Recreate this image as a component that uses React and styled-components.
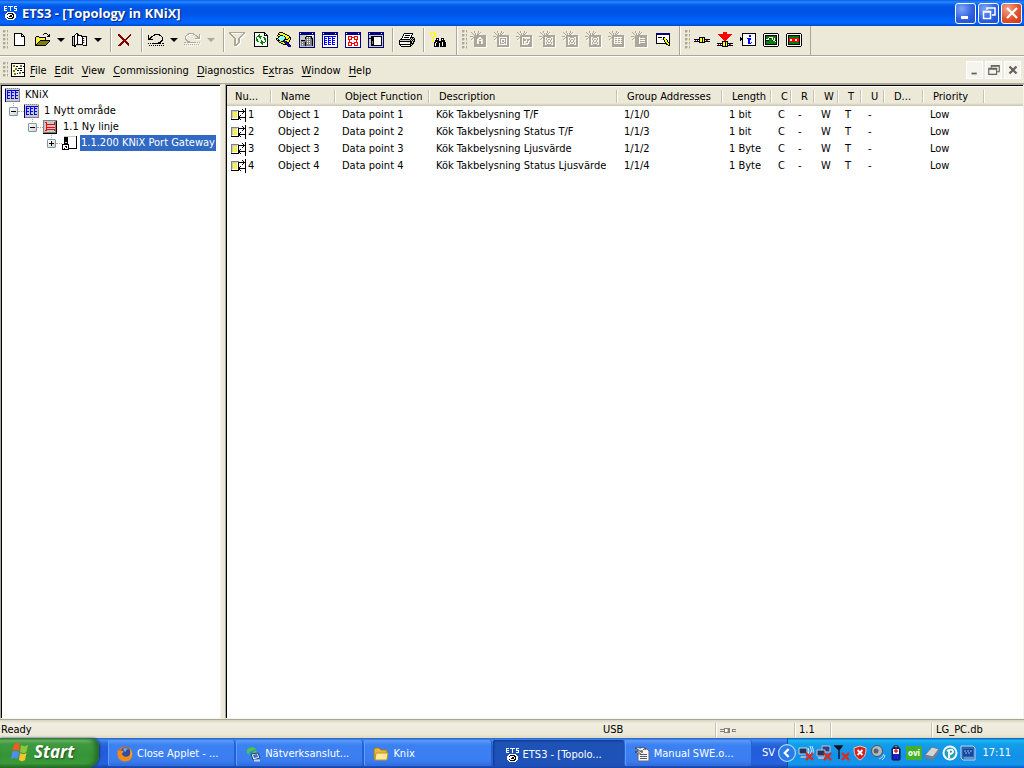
import React, { useState } from 'react';
import styled, { createGlobalStyle, css } from 'styled-components';

const GlobalStyle = createGlobalStyle`
  * {
    box-sizing: border-box;
  }
  body {
    margin: 0;
    background: #ece9d8;
  }
  body, button {
    font-family: "DejaVu Sans Condensed", Tahoma, "DejaVu Sans", sans-serif;
    font-size: 11px;
    line-height: 16px;
    color: #000;
  }
  button {
    border: 0;
    padding: 0;
    background: none;
  }
`;

const Root = styled.div`
  display: flex;
  flex-direction: column;
  height: 100vh;
  overflow: hidden;
  background: #ece9d8;
`;

/* ---------- sprites ---------- */

const COLORS = {
  k: '#000000', w: '#ffffff', n: '#000080', b: '#0000ff', r: '#ff0000', d: '#800000',
  g: '#aca899', s: '#c8c8c8', m: '#808080', y: '#ffff00', o: '#808000', e: '#008000',
  c: '#80ffff', q: '#666257', f: '#f0e890',
};

const SpriteSvg = styled.svg`
  display: block;
  flex: none;
`;

function Sprite({ rows, emboss }) {
  const width = rows[0].length + (emboss ? 1 : 0);
  const height = rows.length + (emboss ? 1 : 0);
  const runs = [];
  rows.forEach((row, y) => {
    let x = 0;
    while (x < row.length) {
      let end = x + 1;
      while (row[end] === row[x]) end += 1;
      if (COLORS[row[x]]) runs.push({ x, y, w: end - x, fill: COLORS[row[x]] });
      x = end;
    }
  });
  return (
    <SpriteSvg width={width} height={height} shapeRendering="crispEdges" aria-hidden="true">
      {emboss && runs.map(r => (
        <rect key={`s${r.x}-${r.y}`} x={r.x + 1} y={r.y + 1} width={r.w} height="1" fill="#fff" />
      ))}
      {runs.map(r => (
        <rect key={`${r.x}-${r.y}`} x={r.x} y={r.y} width={r.w} height="1" fill={r.fill} />
      ))}
    </SpriteSvg>
  );
}

const NEW = [
  'kkkkkkkk...',
  'kwwwwwwkk..',
  'kwwwwwwkwk.',
  'kwwwwwwkkkk',
  'kwwwwwwwwwk',
  'kwwwwwwwwwk',
  'kwwwwwwwwwk',
  'kwwwwwwwwwk',
  'kwwwwwwwwwk',
  'kwwwwwwwwwk',
  'kwwwwwwwwwk',
  'kwwwwwwwwwk',
  'kkkkkkkkkkk',
];
const OPEN = [
  '.........kkk...',
  '........k...k.k',
  '.............kk',
  '.kkk........kkk',
  'kfyfkkkkkkk....',
  'kyfyfyfyfyk....',
  'kfyfyfyfyfk....',
  'kyfyfkkkkkkkkkk',
  'kfyfkoooooooook',
  'kyfkoooooooook.',
  'kfkoooooooook..',
  'kkoooooooook...',
  'kkkkkkkkkkk....',
];
const BOOK = [
  '....kk.........',
  '...kwkk........',
  '..kwwkkkkk.....',
  'kkkwwkwwwkkkkkk',
  'kskwwkwwwwkwwwk',
  'kskwwkwwwwkdswk',
  'kskwwkwwwwkwwwk',
  'kskwwkwwwwkdswk',
  'kskwwkwwwwkwwwk',
  'kskwwkwwwwkdswk',
  'kskwwkwwwwkwwwk',
  'kskwkkkkkkkwwwk',
  'kkkkssssssskkkk',
  '..kk...........',
];
const DELETE = [
  'dd..........d',
  'ddd........dd',
  '.ddd......dd.',
  '..ddd....dd..',
  '...ddd..dd...',
  '....ddddd....',
  '.....ddd.....',
  '....ddddd....',
  '...ddd.ddd...',
  '..ddd...ddd..',
  '.ddd.....dd..',
  'ddd.......d..',
];
const UNDO = [
  '......kkkkkk....',
  'k....kk....kk...',
  'k..kk........k..',
  'k.kk..........k.',
  'kkk...........k.',
  'kkkkk.........k.',
  '.............kk.',
  '............kk..',
  '..........kkk...',
  'k.k.kkkkkkkkk.kk',
  '................',
  '.k.k.k.k.k.k.k.k',
];
const REDO = UNDO.map(row => row.split('').reverse().join('').replace(/k/g, 'g'));
const FILTER = [
  'gggggggggggggggg',
  'gg............gg',
  '.gg..........gg.',
  '..gg........gg..',
  '...gg......gg...',
  '....gg....gg....',
  '.....gg..gg.....',
  '.....gg..gg.....',
  '.....gg..gg.....',
  '.....gg..gg.....',
  '.....gg..gg.....',
  '.....gg.gg......',
  '.....gggg.......',
  '.....ggg........',
];
const REFRESH = [
  'kkkkkkkkkkk...',
  'kwwwwwwwwwkk..',
  'kwwwwewwwwkwk.',
  'kwwweewwwwkkkk',
  'kwweeeeewwwwwk',
  'kwewweewweewwk',
  'kwewwwewwweewk',
  'kweewwwwwweewk',
  'kweewwwewwwewk',
  'kwweewweewwewk',
  'kwwwwweeeeewwk',
  'kwwwwwweewwwwk',
  'kwwwwwwwewwwwk',
  'kwwwwwwwwwwwwk',
  'kkkkkkkkkkkkkk',
];
const MAGNIFY = [
  '...kkkk.........',
  '..kyyyykk.......',
  '..kkyyyyykk.....',
  '.kyykkkyyyykk...',
  '..kkcccckyyyyk..',
  '..kcwcccckyyykk.',
  'kkcwccccckyykyk.',
  'kykccccckkkkyyk.',
  '.kkkccckkyyyyk..',
  '..kyykkkbbkyyk..',
  '...kkyyykbbkk...',
  '.....kkyykbbk...',
  '.......kkkkbbk..',
  '...........kbbk.',
  '............kbn.',
];

const frame = inner => [
  'nnnnnnnnnnnnnnnn',
  'nwnnnnnnnnnnnwnn',
  'nnnnnnnnnnnnnnnn',
  ...inner.map(row => `n${row}n`),
  'nnnnnnnnnnnnnnnn',
];
const WIN_BUILDING = frame([
  'ssssssswwwwwww',
  'sssssskkkkkkws',
  'ssssskmwmwmkss',
  'ssssskmmmmmkks',
  'sssssmmwmwmmks',
  'skkkkmmmmmmmks',
  'smmmmmmwmwmmks',
  'smwmmkmmmmmmks',
  'smmmmkmwmwmmks',
  'smwmmkmmmmmmks',
  'smmmmkmmmmmmks',
  'ssssssssssssss',
]);
const WIN_GRID = frame([
  'wwwwwwwwwwwwww',
  'wbbbbbbbbbbbbw',
  'wbwwwbwwwbwwww',
  'wbbbwbbbwbbbww',
  'wbwwwbwwwbwwww',
  'wbbbwbbbwbbbww',
  'wbwwwbwwwbwwww',
  'wbbbwbbbwbbbww',
  'wbwwwbwwwbwwww',
  'wbbbwbbbwbbbww',
  'wwwwwwwwwwwwww',
  'wwwwwwwwwwwwww',
]);
const WIN_RED = frame([
  'wwwwwwwwwwwwww',
  'wwrrrrwwrrrrww',
  'wwrwwrrrrwwrww',
  'wwrwwrwwrwwrww',
  'wwrrrrwwrrrrww',
  'wwwrwwwwwwrwww',
  'wwwrwwwwwwrwww',
  'wwrrrrwwrrrrww',
  'wwrwwrrrrwwrww',
  'wwrwwrwwrwwrww',
  'wwrrrrwwrrrrww',
  'wwwwwwwwwwwwww',
]);
const WIN_DEVICE = frame([
  'ssssssssssssss',
  'sskkkkkkkkkkks',
  'sskkkwwwwwwwks',
  'kkkkkwwwwwwwks',
  'sskkkwwwwwwwks',
  'sskkkwwwwwwwks',
  'sskmkwwwwwwwks',
  'sskmkwwwwwwwks',
  'sskmkwwwwwwwks',
  'sskkkwwwwwwwks',
  'sskkkkkkkkkkks',
  'ssssssssssssss',
]);
const PRINT = [
  '.....kkkkkkkkk..',
  '....kwwwwwwwwk..',
  '....kwkkkkkwk...',
  '...kwwwwwwwwk...',
  '...kwkkkkkwkkkk.',
  '..kwwwwwwwwksksk',
  '.kkkkkkkkkkskskk',
  'kssssssssssksksk',
  'kkkkkkkkkkkkkskk',
  'kwwwwwwwyywkksk.',
  'kwwwwwwwwwwkkkk.',
  'kkkkkkkkkkkksk..',
  '.kwwwwwwwwwkk...',
  '..kkkkkkkkkk....',
];
const FIND = [
  '.yyyy...........',
  'yy..yy..........',
  'yy..yy..........',
  '....yy..........',
  '...yy...........',
  '..yy............',
  '..yy..kkk..kkk..',
  '......kwk..kwk..',
  '..yy.kkkk..kkkk.',
  '..yy.kkkkkkkkkk.',
  '....kkwkkkkkwkkk',
  '....kwkkkwkkwkkk',
  '....kwkkk.kkwkkk',
  '....kwkkk.kkwkkk',
  '....kkkkk.kkkkkk',
];

const disabled = glyph => [
  '....g...g.......',
  '.g..g...g.g.....',
  '..g..g.g.g......',
  '...g.g.gg.......',
  '....gggggggggggg',
  'ggg.gggggggggggg',
  ...glyph.map((row, i) => `${['...g', '..g.', '.g..'][i] || '....'}gg${row}gg`),
  '....gggggggggggg',
  '....gggggggggggg',
];
// inside the box the glyph is cut out of the panel colour
const DIS_HOUSE = disabled(['ggg..ggg', 'gg....gg', 'g..gg..g', 'g......g', 'g..gg..g', 'g..gg..g', 'g..gg..g', 'gggggggg']);
const DIS_SQUARE = disabled(['........', '.gggggg.', '.g....g.', '.g.gg.g.', '.g.gg.g.', '.g...gg.', '.gggg.g.', '........']);
const DIS_FLAG = disabled(['........', '.g......', '.ggg.ggg', '.ggg.gg.', '.g...g..', '.g..gg.g', '.g.....g', '......gg']);
const DIS_NODES = disabled(['..gggg..', '.g....g.', '.g.gg.g.', '..g..g..', '..g..g..', '.g.gg.g.', '.g....g.', '..gggg..']);
const DIS_TABLE = disabled(['........', '.gg.gg.g', '........', '.gg.gg.g', '........', '.gg.gg.g', '........', 'gggggggg']);
const DIS_TREE = disabled(['gg.ggggg', 'gg......', 'gg.ggggg', 'gg......', 'gg.ggggg', 'gg......', 'gg.ggggg', 'gggggggg']);

const EDIT_WIN = [
  'nnnnnnnnnnnnnn',
  'nnnnnnnnnnnnnn',
  'kwwwwwwwwwwwwk',
  'kwwwwwwwwwwwwk',
  'kwkkkkwkkwwwwk',
  'kwwwwwwkyywwwk',
  'kwwwwsskyykwwk',
  'kwwwwwwwkyykwk',
  'kwwwwwwwkyykwk',
  'kwwwwwwwwkyykk',
  'kkkkkkkkkkkyyk',
  '..........kkyk',
  '............kk',
];
const BUS = [
  '.....kkkkkk.....',
  '.....kyykyk.....',
  'kkkkkkywkykkkkkk',
  'wrwbwkywkykwbrww',
  'kkkkkkyykykkkkkk',
  '.....kkkkkk.....',
];
const DOWNLOAD = [
  '......rrrr......',
  '......rrrr......',
  '.rrrrrrrrrrrrrr.',
  '..rrrrrrrrrrrr..',
  '...rrrrrrrrrr...',
  '....rrrrrrrr....',
  '.....rrrrrr.....',
  '......rrrr......',
  '.......rr.......',
  ...BUS,
];
const INFO = [
  '..kkkkkkkkkkkkkk',
  '..kwwwwwwwwwwwwk',
  '..kwwwwwwbbwwwwk',
  '..kwwwwwwbbwwwwk',
  'k.kwwwwwwwwwwwwk',
  'kkkwwwwbbbbwwwwk',
  'kkkwwwwwbbbwwwwk',
  'k.kwwwwwbbwwwwwk',
  '..kwwwwwbbwwwwwk',
  '..kwwwwwbbwbwwwk',
  '..kwwwwwbbbwwwwk',
  '..kwwwwwwwwwwwwk',
  '..kkkkkkkkkkkkkk',
];
const monitor = inner => [
  '.kkkkkkkkkkkkkk.',
  'kwwwwwwwwwwwwwwk',
  ...inner.map(row => `kw${row}wk`),
  'kwwwwwwwwwwwwwwk',
  '.kkkkkkkkkkkkkk.',
];
const SCOPE = monitor([
  'kkkkkkkkkkkk',
  'keeeeeeeeeek',
  'keeewwwweeek',
  'keewkkewewek',
  'kwwweeewewek',
  'kkkkeeekwwkk',
  'keeeeeeeeewk',
  'keeeeeeeeeek',
  'keeeeeeeeeek',
  'kkkkkkkkkkkk',
]);
const RECORDER = monitor([
  'kkkkkkkkkkkk',
  'keeeeeeeeeek',
  'keeeeeeeeeek',
  'krrrrrrrrrrk',
  'krwwrrrwwrrk',
  'krwwrrrwwrrk',
  'krrrrrrrrrrk',
  'keeeeeeeeeek',
  'keeeeeeeeeek',
  'kkkkkkkkkkkk',
]);

const AREA = [
  'msmsmsmsmsmsmss',
  'nsssssssssssssm',
  'nsbbbbbbbbbbbbm',
  'nsbsssbsssbsssm',
  'nsbbbsbbbsbbbsm',
  'nsbsssbsssbsssm',
  'nsbsssbsssbsssm',
  'nsbbbsbbbsbbbsm',
  'nsbsssbsssbsssm',
  'nsbsssbsssbsssm',
  'nsbbbsbbbsbbbsm',
  'nssssssssssssssm'.slice(0, 14) + 'm',
  'nsssssssssssssm',
  'nmmmmmmmmmmmmmm',
];
const LINE = [
  'mmmmmmmmmmmmmm',
  'msssssssssssmk',
  'msrrsssssssrmk',
  'mssrsssssssrmk',
  'mssrrrrrrrrrmk',
  'mssrssssssssmk',
  'mssrssssssssmk',
  'mssrrrrrrrrrmk',
  'mssrssssssssmk',
  'mssrrrrrrrrrmk',
  'msrrsssssssrmk',
  'msssssssssssmk',
  'mmmmmmmmmmmmmk',
  'kkkkkkkkkkkkkk',
];
const DEVICE = [
  '..ssssssssssssk',
  '..kkkkwwwwwwwwk',
  '..kkkkwwwwwwwwk',
  '..kkkkwwwwwwwwk',
  '..kkkkwwwwwwwwk',
  '..kkkkwwwwwwwwk',
  '..ksskwwwwwwwwk',
  '..kkkkwwwwwwwwk',
  'kkkkkkkwwwwwwwk',
  'kwwwwwkwwwwwwwk',
  'kwwkkwkwwwwwwwk',
  'kwwwkwkwwwwwwwk',
  'kwkwwwkkkkkkkkk',
  'kkkkkkk........',
];
const OBJECT = [
  '..............k.',
  '...........k..k.',
  'mmmmmmmm....k.k.',
  'mssssswkkkkkkkk.',
  'msyfyfwk....k.k.',
  'msfyfywk...k..k.',
  'msyfyfwk......k.',
  'msfyfywk.k....k.',
  'msyfyfwkk.....k.',
  'msfyfywkkkkkkkk.',
  'mwwwwwwkk.....k.',
  'kkkkkkkk.k....k.',
  '..............k.',
  '..............k.',
];
const DOCUMENT = [
  'kkkkkkkkkkkkkk',
  'kwwwwwwwwwwwwk',
  'kwoowwwwwoowwk',
  'kwoowkkwwoowkk',
  'kwwwwwwwwwwwwk',
  'kwwwoowkkkkwwk',
  'kwwwoowwwwwwwk',
  'kwoowwkkwkkwwk',
  'kwoowwwwwwwwwk',
  'kwwwwwwwoowkkk',
  'kwwoowkwoowwwk',
  'kwwoowwwwwwwwk',
  'kwwwwwwwwwwwwk',
  'kkkkkkkkkkkkkk',
];
const PLUG = [
  '....mmmmmm......',
  'mmmmmwwsmm..mmmm',
  '....mwwsmm..m...',
  'mmmmmwwsmm..mmmm',
  '....mmmmmm......',
];
const ETS = [
  'www.wwwww.www',
  'w.....w...w..',
  'www...w...www',
  'w.....w.....w',
  'www...w...www',
  '.............',
  '...wwwwwww...',
  '..wwkkkkkww..',
  '.wwkwwwwkkww.',
  '.wwwwwkkwkww.',
  '.wwwwkkkwkww.',
  '.wwkwwwwkkww.',
  '..wwkkkkkww..',
  '...wwwwwww...',
];

/* ---------- title bar ---------- */

const TitleBar = styled.header`
  display: flex;
  align-items: center;
  flex: none;
  height: 26px;
  padding: 0 2px 0 4px;
  gap: 5px;
  background: linear-gradient(#0a5ee8 0, #2a86ff 8%, #0567f4 16%, #0055e5 28%, #0055e8 56%, #0062fa 76%, #0066ff 88%, #0046c8 100%);
`;

const Title = styled.h1`
  flex: 1;
  margin: 0;
  font-family: "Open Sans", "Trebuchet MS", sans-serif;
  font-size: 13px;
  line-height: 18px;
  font-weight: bold;
  color: #fff;
  text-shadow: 1px 1px 1px #0a1f7a;
`;

const WindowButtons = styled.div`
  display: flex;
  gap: 2px;
`;

const WindowButton = styled.button`
  display: flex;
  align-items: center;
  justify-content: center;
  width: 21px;
  height: 21px;
  border: 1px solid #fff;
  border-radius: 3px;
  background: ${props => (props.$close
    ? 'radial-gradient(circle at 30% 25%, #f0a58c, #e0532c 55%, #c2391a)'
    : 'radial-gradient(circle at 30% 25%, #7ea6f8, #2f62e0 55%, #1c4bd0)')};
`;

/* ---------- toolbars ---------- */

const ToolbarRow = styled.div`
  display: flex;
  flex: none;
  height: 30px;
  border-bottom: 1px solid #aca899;
`;

const Band = styled.div`
  display: flex;
  align-items: center;
  padding: 0 ${props => props.$end || 5}px 2px 4px;
  border-left: 1px solid #fff;
  border-right: 1px solid #aca899;
  &:first-child {
    border-left: 0;
    padding-left: 3px;
  }
`;

const Grip = styled.span`
  flex: none;
  width: 5px;
  height: ${props => props.$height || 20}px;
  background:
    linear-gradient(#aca899, #aca899) 0 0 / 2px 0 no-repeat,
    radial-gradient(circle at 1px 1px, #aca899 1px, transparent 2px) 0 0 / 4px 4px;
`;

const ToolButton = styled.button`
  display: flex;
  align-items: center;
  justify-content: center;
  width: 23px;
  height: 22px;
`;

const DropButton = styled.button`
  display: flex;
  align-items: center;
  width: 14px;
  height: 22px;
  padding-left: 3px;
  &::after {
    content: '';
    border: solid transparent;
    border-width: 4px 4px 0;
    border-top-color: ${props => (props.$off ? '#aca899' : '#000')};
  }
`;

const Separator = styled.span`
  width: 2px;
  height: 24px;
  margin: 0 1px 0 5px;
  border-left: 1px solid #aca899;
  border-right: 1px solid #fff;
`;

const MenuBar = styled.nav`
  display: flex;
  align-items: center;
  flex: none;
  height: 28px;
  padding: 0 3px;
  border-top: 1px solid #fff;
  border-bottom: 1px solid #aca899;
`;

const MenuIcon = styled.span`
  margin: 0 1px 0 3px;
`;

const MenuItem = styled.button`
  padding: 1px 4px 0;
  line-height: 20px;
`;

const Mnemonic = styled.span`
  text-decoration: underline;
  text-underline-offset: 2px;
`;

const MdiButtons = styled.div`
  display: flex;
  gap: 2px;
  margin-left: auto;
`;

const MdiButton = styled.button`
  display: flex;
  align-items: center;
  justify-content: center;
  width: 17px;
  height: 18px;
  background: #f5f4ee;
  border: 1px solid #fff;
`;

/* ---------- panes ---------- */

const Main = styled.main`
  display: flex;
  flex: 1;
  min-height: 0;
  gap: 4px;
`;

const paneBorder = css`
  border: 1px solid #aca899;
  border-right-color: #f5f4ea;
  border-bottom-color: #f5f4ea;
  box-shadow: inset 1px 1px 0 #000;
  background: #fff;
`;

const TreePane = styled.aside`
  ${paneBorder}
  flex: none;
  width: 221px;
  padding: 2px 0 0 1px;
`;

const ListPane = styled.section`
  ${paneBorder}
  flex: 1;
  min-width: 0;
  padding: 2px 0 0 1px;
  overflow: hidden;
`;

const Tree = styled.ul`
  margin: 0;
  padding: 0;
  list-style: none;
`;

const Branch = styled.ul`
  margin: 0;
  padding: 0 0 0 ${props => (props.$first ? 7 : 19)}px;
  list-style: none;
`;

const Node = styled.div`
  display: flex;
  align-items: center;
  height: 16px;
  background: repeating-linear-gradient(#aca899 0 1px, transparent 1px 2px) 4px 0 / 1px 4px no-repeat;
`;

const RootNode = styled(Node)`
  padding-left: 3px;
  background: none;
`;

const Expander = styled.button`
  flex: none;
  width: 9px;
  height: 9px;
  border: 1px solid #7898b5;
  border-radius: 1px;
  background:
    linear-gradient(#000, #000) center / 5px 1px no-repeat,
    ${props => !props.$open && css`linear-gradient(#000, #000) center / 1px 5px no-repeat,`}
    linear-gradient(135deg, #fff, #d8d2c4);
`;

const Dots = styled.span`
  flex: none;
  width: 6px;
  border-top: 1px dotted #aca899;
`;

const NodeIcon = styled.span`
  flex: none;
  width: 15px;
`;

const NodeLabel = styled.span`
  margin-left: 3px;
  padding: 0 2px;
  white-space: nowrap;
  ${props => props.$selected && css`
    padding: 0 1px;
    color: #fff;
    background: #316ac5;
  `}
`;

const Table = styled.table`
  width: 100%;
  table-layout: fixed;
  border-collapse: separate;
  border-spacing: 0;
`;

const headerShade = 'linear-gradient(#ece9d8 0, #ece9d8 84%, #c8c4b0 100%)';

const Th = styled.th`
  height: 19px;
  padding: 0 0 0 ${props => (props.$first ? 8 : 9)}px;
  font-weight: normal;
  text-align: left;
  white-space: nowrap;
  line-height: 16px;
  background:
    linear-gradient(#c5c2b2, #c5c2b2) right 1px top 3px / 1px 13px no-repeat,
    linear-gradient(#fff, #fff) right 0 top 3px / 1px 13px no-repeat,
    ${headerShade};
  &:last-child {
    background: ${headerShade};
  }
`;

const Td = styled.td`
  height: 17px;
  padding: 1px 0 0 6px;
  white-space: nowrap;
  line-height: 16px;
`;

const NumberCell = styled.div`
  display: flex;
  align-items: center;
  gap: 1px;
  margin-left: -2px;
`;

/* ---------- status bar ---------- */

const StatusBar = styled.footer`
  display: flex;
  align-items: center;
  flex: none;
  height: 19px;
  padding-top: 2px;
  border-top: 1px solid #aca899;
  background: linear-gradient(#d8d4c2 0, #f0eee0 20%, #ece9d8 80%, #dcd8c6 100%);
`;

const StatusCell = styled.div`
  display: flex;
  align-items: center;
  height: 14px;
  width: ${props => props.$width}px;
  padding-left: 4px;
  line-height: 14px;
  ${props => props.$line && css`
    border-left: 1px solid #c5c2b2;
    box-shadow: inset 1px 0 0 #fff;
  `}
  ${props => props.$grow && css`
    flex: 1;
    padding-left: 1px;
  `}
`;

/* ---------- taskbar ---------- */

const TaskBar = styled.nav`
  display: flex;
  flex: none;
  height: 30px;
  background: linear-gradient(#3165c4 0, #3f8cf0 8%, #2b71e0 16%, #245ddb 30%, #245ddb 60%, #2562df 86%, #1941a5 100%);
`;

const StartButton = styled.button`
  display: flex;
  align-items: center;
  gap: 4px;
  width: 99px;
  padding: 0 0 2px 10px;
  border-radius: 0 8px 12px 0;
  color: #fff;
  font-family: "Open Sans", sans-serif;
  font-size: 17px;
  line-height: 24px;
  font-weight: bold;
  font-style: italic;
  text-shadow: 1px 1px 2px #1c4f1a;
  background: linear-gradient(#357f34 0, #6bb968 8%, #3f9a3f 20%, #379337 60%, #3a9b3a 85%, #226a22 100%);
  box-shadow: inset -4px 0 5px #256b28, 1px 0 2px #16398a;
`;

const Tasks = styled.div`
  display: flex;
  flex: 1;
  gap: 1px;
  padding: 2px 4px 2px 9px;
`;

const Task = styled.button`
  display: flex;
  align-items: center;
  flex: 1 1 0;
  min-width: 0;
  gap: 4px;
  padding: 1px 0 0 9px;
  border-radius: 2px;
  color: #fff;
  white-space: nowrap;
  background: linear-gradient(#5a9dfa 0, #3c81f3 20%, #3a7df0 80%, #2f6bdb 100%);
  box-shadow: inset 1px 0 0 #5f9ffa, inset -1px 0 0 #2760cf;
  ${props => props.$active && css`
    padding: 3px 0 0 13px;
    background: #1e52b7;
    box-shadow: inset 1px 1px 2px #0f3a8c;
  `}
`;

const Language = styled.span`
  display: flex;
  align-items: center;
  align-self: center;
  height: 20px;
  margin-right: 12px;
  padding-left: 6px;
  color: #fff;
`;

const Tray = styled.div`
  display: flex;
  align-items: center;
  gap: 2px;
  width: 237px;
  padding-right: 13px;
  color: #fff;
  background: linear-gradient(#0c59b9 0, #18b7f2 8%, #139ee9 20%, #1290e8 60%, #1396ea 88%, #095bc9 100%);
  box-shadow: inset 1px 0 0 #0b4fa8;
`;

const TrayToggle = styled.button`
  flex: none;
  height: 18px;
  margin-left: -9px;
`;

const Clock = styled.time`
  margin-left: auto;
`;

const Svg16 = ({ size = 16, children }) => (
  <SpriteSvg width={size} height={size} viewBox="0 0 16 16" aria-hidden="true">{children}</SpriteSvg>
);

const FirefoxIcon = () => (
  <Svg16>
    <circle cx="8" cy="8" r="7.5" fill="#e0701a" />
    <circle cx="8.5" cy="6.5" r="5" fill="#2c4f9e" />
    <path d="M6 3c2-2 5-1 6 1-2-1-3 0-3 1s-1 1-2 0z" fill="#6fa8dc" />
    <path d="M1 3c0 2 1 2 2 2 2-1 3 0 4 1-1 0-2 1-2 2 1 3 5 4 8 1 1-2 1-4 0-6 3 3 3 8 0 11-3 2-8 2-11-1C0 10 0 6 1 3z" fill="#f08a1c" />
    <path d="M13 3c2 3 2 6 0 8 1-2 1-5 0-8z" fill="#ffd84a" />
  </Svg16>
);

const NetworkIcon = () => (
  <Svg16>
    <circle cx="6.5" cy="6" r="5.5" fill="#2b8fd8" />
    <path d="M2 4c2-3 6-4 9-1L7 5 4 6l1 3-3-2zM8 6l3-2 1 3-3 3z" fill="#58c04a" />
    <path d="M6 8l7-1 2 5-7 2z" fill="#dfe8f6" stroke="#24407a" />
    <path d="M8 9l4-1 1 3-4 1z" fill="#3a6cc8" />
    <path d="M9 14.5h6" stroke="#c8d4e4" strokeWidth="2" />
  </Svg16>
);

const FolderIcon = () => (
  <Svg16>
    <path d="M1 4q0-2 2-2h3l2 2h5q1 0 1 1v8H2q-1 0-1-1z" fill="#e8b93c" stroke="#a87a14" />
    <path d="M3 7h12l-1 6q0 1-1 1H2z" fill="#fdeb98" stroke="#c0942a" />
  </Svg16>
);

const WriterIcon = () => (
  <Svg16>
    <path d="M4 3h9l2 2v10H4z" fill="#f8f8f8" stroke="#667" />
    <path d="M6 8.5h7M6 10.5h7M6 12.5h7" stroke="#556" />
    <path d="M1 2c3-2 4 1 6 0 1-1 3-1 5 1-3-1-3 2-5 2S3 2 1 2zM1 6c2-1 3 1 5 0 1-1 2-1 3 0-2 0-2 2-4 2S3 6 1 6z" fill="#fff" stroke="#222" strokeWidth=".7" />
  </Svg16>
);

const WindowsFlag = () => (
  <SpriteSvg width="20" height="20" viewBox="0 0 20 20" aria-hidden="true">
    <path d="M4 2c2-1.500 4-1.500 6 0L9 9c-2-1.500-4-1.500-6.500 0z" fill="#ee5a26" />
    <path d="M11 3c2 1.500 4 1.500 7 0l-1.500 7c-2 1.500-4 1.500-6.500 0z" fill="#8cc63e" />
    <path d="M2.500 10c2-1.500 4-1.500 6.500 0l-1 7c-2-1.500-4-1.500-7 0z" fill="#4f8df5" />
    <path d="M10 11c2 1.500 4 1.500 6.500 0l-1.500 7c-2 1.500-4 1.500-6 0z" fill="#fbc52c" />
  </SpriteSvg>
);

const RedCross = () => <path d="M8 8l7 7M15 8l-7 7" stroke="#e0281c" strokeWidth="2.400" />;

const trayIcons = [
  <>
    <path d="M1 3h8v6H1z" fill="#23355e" stroke="#c8d4e8" />
    <path d="M3 11h5v2H2z" fill="#a8b4cc" />
    <path d="M10 3q2 3 0 6M12 1q3 5 0 9M14 1q2 4 1 8" fill="none" stroke="#dfefff" />
    <RedCross />
  </>,
  <>
    <path d="M6 1h8v6H6z" fill="#2d4380" stroke="#b8c6e0" />
    <path d="M1 5h8v6H1z" fill="#23355e" stroke="#b8c6e0" />
    <path d="M2 13h6" stroke="#a8b4cc" strokeWidth="2" />
    <RedCross />
  </>,
  <>
    <path d="M1 1h7L5 5zM5 2v12" fill="#112" stroke="#112" strokeWidth="1.400" />
    <RedCross />
  </>,
  <>
    <path d="M8 1l6 2c0 6-1 9-6 12C3 12 2 9 2 3z" fill="#d42020" stroke="#f0c8c0" />
    <path d="M5.500 5l5 5M10.500 5l-5 5" stroke="#fff" strokeWidth="1.800" />
  </>,
  <>
    <circle cx="7" cy="6" r="5.500" fill="#b4bac2" stroke="#4c525c" />
    <circle cx="6" cy="6" r="2.500" fill="#5a626e" />
    <path d="M9 14q4-1 5-5M12 15q3-2 3-5" fill="none" stroke="#bcd8f8" />
  </>,
  <>
    <path d="M6 1h4v2H6z" fill="#ddd" stroke="#112" />
    <rect x="4" y="3" width="8" height="12" rx="1" fill="#1420c8" stroke="#112" />
    <path d="M5 4h6v5H5z" fill="#fff" />
    <path d="M8 4v4M6 6h4" stroke="#e02020" strokeWidth="1.400" />
  </>,
  <>
    <rect width="16" height="14" y="1" fill="#43b02a" />
    <text x="8" y="11" textAnchor="middle" fontSize="8" fontWeight="bold" fill="#fff">ovi</text>
  </>,
  <>
    <path d="M1 10l7-8 7 2-6 8z" fill="#d0d4dc" stroke="#70767e" />
    <path d="M1 10l8 2 6-8v3l-6 8-8-2z" fill="#787e88" />
  </>,
  <>
    <circle cx="8" cy="8" r="7.500" fill="#f4fafc" />
    <circle cx="8" cy="8" r="5.500" fill="#2aa0b8" />
    <path d="M7 13V5q4-1 4 1.500 0 2-3 2.500M5 6l2-1" fill="none" stroke="#fff" strokeWidth="1.800" />
  </>,
  <>
    <path d="M1 1h12l2 2v12H3l-2-2z" fill="#2c66b8" stroke="#bcd8f4" />
    <path d="M3 4h10v7H3z" fill="#17469a" />
    <path d="M4 6h2M7 6h2M10 6h2M5 8h2M8 8h2M4 13h10" stroke="#8fc0f0" />
  </>,
];

/* ---------- data ---------- */

const tools = [
  { name: 'New', rows: NEW },
  { name: 'Open', rows: OPEN, drop: true },
  { name: 'Catalog', rows: BOOK, drop: true },
  'sep',
  { name: 'Delete', rows: DELETE },
  'sep',
  { name: 'Undo', rows: UNDO, drop: true },
  { name: 'Redo', rows: REDO, drop: true, off: true },
  'sep',
  { name: 'Filter', rows: FILTER, off: true },
  { name: 'Refresh', rows: REFRESH },
  { name: 'Find device', rows: MAGNIFY },
  { name: 'Buildings', rows: WIN_BUILDING },
  { name: 'Topology', rows: WIN_GRID },
  { name: 'Group addresses', rows: WIN_RED },
  { name: 'Devices', rows: WIN_DEVICE },
  'sep',
  { name: 'Print', rows: PRINT },
  'sep',
  { name: 'Search', rows: FIND },
];

const insertTools = [
  { name: 'Add building', rows: DIS_HOUSE, off: true },
  { name: 'Add room', rows: DIS_SQUARE, off: true },
  { name: 'Add cabinet', rows: DIS_FLAG, off: true },
  { name: 'Add main group', rows: DIS_NODES, off: true },
  { name: 'Add middle group', rows: DIS_NODES, off: true },
  { name: 'Add group address', rows: DIS_NODES, off: true },
  { name: 'Add area', rows: DIS_TABLE, off: true },
  { name: 'Add line', rows: DIS_TREE, off: true },
  { name: 'Edit parameters', rows: EDIT_WIN },
];

const busTools = [
  { name: 'Connect', rows: BUS },
  { name: 'Download', rows: DOWNLOAD },
  { name: 'Device info', rows: INFO },
  { name: 'Bus monitor', rows: SCOPE },
  { name: 'Group monitor', rows: RECORDER },
];

const menus = [
  ['', 'F', 'ile'],
  ['', 'E', 'dit'],
  ['', 'V', 'iew'],
  ['', 'C', 'ommissioning'],
  ['', 'D', 'iagnostics'],
  ['E', 'x', 'tras'],
  ['', 'W', 'indow'],
  ['', 'H', 'elp'],
];

const columns = [
  ['Nu...', 45],
  ['Name', 64],
  ['Object Function', 94],
  ['Description', 188],
  ['Group Addresses', 105],
  ['Length', 49],
  ['C', 20],
  ['R', 23],
  ['W', 24],
  ['T', 23],
  ['U', 23],
  ['D...', 39],
  ['Priority', 61],
];

const objects = [
  ['1', 'Object 1', 'Data point 1', 'Kök Takbelysning T/F', '1/1/0', '1 bit'],
  ['2', 'Object 2', 'Data point 2', 'Kök Takbelysning Status T/F', '1/1/3', '1 bit'],
  ['3', 'Object 3', 'Data point 3', 'Kök Takbelysning Ljusvärde', '1/1/2', '1 Byte'],
  ['4', 'Object 4', 'Data point 4', 'Kök Takbelysning Status Ljusvärde', '1/1/4', '1 Byte'],
].map(row => [...row, 'C', '-', 'W', 'T', '-', '', 'Low']);

const tasks = [
  { title: 'Close Applet - ...', icon: <FirefoxIcon /> },
  { title: 'Nätverksanslut...', icon: <NetworkIcon /> },
  { title: 'Knix', icon: <FolderIcon /> },
  { title: 'ETS3 - [Topolo...', icon: <Sprite rows={ETS} /> },
  { title: 'Manual SWE.o...', icon: <WriterIcon /> },
];

function Tools({ items, end }) {
  return (
    <Band $end={end}>
      <Grip />
      {items.map((tool, i) => (tool === 'sep' ? <Separator key={i} /> : (
        <React.Fragment key={tool.name}>
          <ToolButton type="button" aria-label={tool.name} disabled={tool.off}>
            <Sprite rows={tool.rows} emboss={tool.off} />
          </ToolButton>
          {tool.drop && (
            <DropButton type="button" aria-label={`${tool.name} list`} $off={tool.off} disabled={tool.off} />
          )}
        </React.Fragment>
      )))}
    </Band>
  );
}

export default function App() {
  const [activeTask, setActiveTask] = useState(3);

  return (
    <Root>
      <GlobalStyle />
      <TitleBar>
        <Sprite rows={ETS} />
        <Title>ETS3 - [Topology in KNiX]</Title>
        <WindowButtons>
          <WindowButton type="button" aria-label="Minimize">
            <Svg16><path d="M3 11h7v3H3z" fill="#fff" /></Svg16>
          </WindowButton>
          <WindowButton type="button" aria-label="Restore">
            <Svg16><path d="M6 5V3h8v7h-3M2.500 6.500h7v7h-7zM2 7h8M6 3h8" fill="none" stroke="#fff" strokeWidth="1.500" /></Svg16>
          </WindowButton>
          <WindowButton type="button" aria-label="Close" $close>
            <Svg16><path d="M3 3l10 10M13 3L3 13" stroke="#fff" strokeWidth="2.200" /></Svg16>
          </WindowButton>
        </WindowButtons>
      </TitleBar>

      <ToolbarRow>
        <Tools items={tools} end={7} />
        <Tools items={insertTools} />
        <Tools items={busTools} />
      </ToolbarRow>

      <MenuBar>
        <Grip $height={16} />
        <MenuIcon><Sprite rows={DOCUMENT} /></MenuIcon>
        {menus.map(([before, key, after]) => (
          <MenuItem type="button" key={before + key + after}>
            {before}<Mnemonic>{key}</Mnemonic>{after}
          </MenuItem>
        ))}
        <MdiButtons>
          <MdiButton type="button" aria-label="Minimize document">
            <Svg16 size={14}><path d="M4 11h6v2H4z" fill="#666257" /></Svg16>
          </MdiButton>
          <MdiButton type="button" aria-label="Restore document">
            <Svg16 size={14}><path d="M5 5V3h9v7h-3M2 6h9v7H2zM2 7h9M5 3.500h9" fill="none" stroke="#666257" strokeWidth="1.300" /></Svg16>
          </MdiButton>
          <MdiButton type="button" aria-label="Close document">
            <Svg16 size={14}><path d="M4 4l8 8M12 4l-8 8" stroke="#666257" strokeWidth="2.600" /></Svg16>
          </MdiButton>
        </MdiButtons>
      </MenuBar>

      <Main>
        <TreePane>
          <Tree>
            <li>
              <RootNode>
                <NodeIcon><Sprite rows={AREA} /></NodeIcon>
                <NodeLabel>KNiX</NodeLabel>
              </RootNode>
              <Branch $first>
                <li>
                  <Node>
                    <Expander type="button" aria-label="Collapse area" $open />
                    <Dots />
                    <NodeIcon><Sprite rows={AREA} /></NodeIcon>
                    <NodeLabel>1 Nytt område</NodeLabel>
                  </Node>
                  <Branch>
                    <li>
                      <Node>
                        <Expander type="button" aria-label="Collapse line" $open />
                        <Dots />
                        <NodeIcon><Sprite rows={LINE} /></NodeIcon>
                        <NodeLabel>1.1 Ny linje</NodeLabel>
                      </Node>
                      <Branch>
                        <li>
                          <Node>
                            <Expander type="button" aria-label="Expand device" />
                            <Dots />
                            <NodeIcon><Sprite rows={DEVICE} /></NodeIcon>
                            <NodeLabel $selected>1.1.200 KNiX Port Gateway</NodeLabel>
                          </Node>
                        </li>
                      </Branch>
                    </li>
                  </Branch>
                </li>
              </Branch>
            </li>
          </Tree>
        </TreePane>

        <ListPane>
          <Table>
            <colgroup>
              {columns.map(([name, width]) => <col key={name} width={width} />)}
              <col />
            </colgroup>
            <thead>
              <tr>
                {columns.map(([name], i) => <Th key={name} $first={i === 0}>{name}</Th>)}
                <Th aria-hidden="true" />
              </tr>
            </thead>
            <tbody>
              {objects.map(row => (
                <tr key={row[0]}>
                  {row.map((cell, i) => (
                    <Td key={columns[i][0]}>
                      {i === 0 ? <NumberCell><Sprite rows={OBJECT} />{cell}</NumberCell> : cell}
                    </Td>
                  ))}
                  <Td />
                </tr>
              ))}
            </tbody>
          </Table>
        </ListPane>
      </Main>

      <StatusBar>
        <StatusCell $grow>Ready</StatusCell>
        <StatusCell $width={116}>USB</StatusCell>
        <StatusCell $width={79} $line><Sprite rows={PLUG} /></StatusCell>
        <StatusCell $width={36} $line>1.1</StatusCell>
        <StatusCell $width={101} $line />
        <StatusCell $width={93} $line>LG_PC.db</StatusCell>
      </StatusBar>

      <TaskBar>
        <StartButton type="button"><WindowsFlag />Start</StartButton>
        <Tasks>
          {tasks.map((task, i) => (
            <Task type="button" key={task.title} $active={i === activeTask} onClick={() => setActiveTask(i)}>
              {task.icon}
              {task.title}
            </Task>
          ))}
        </Tasks>
        <Language>SV</Language>
        <Tray>
          <TrayToggle type="button" aria-label="Show hidden icons">
            <Svg16 size={18}>
              <circle cx="8" cy="8" r="7.500" fill="#2a7de8" stroke="#b8dcff" />
              <path d="M9.500 4.500L6 8l3.500 3.500" fill="none" stroke="#fff" strokeWidth="2" />
            </Svg16>
          </TrayToggle>
          {trayIcons.map((icon, i) => <Svg16 key={i}>{icon}</Svg16>)}
          <Clock>17:11</Clock>
        </Tray>
      </TaskBar>
    </Root>
  );
}
